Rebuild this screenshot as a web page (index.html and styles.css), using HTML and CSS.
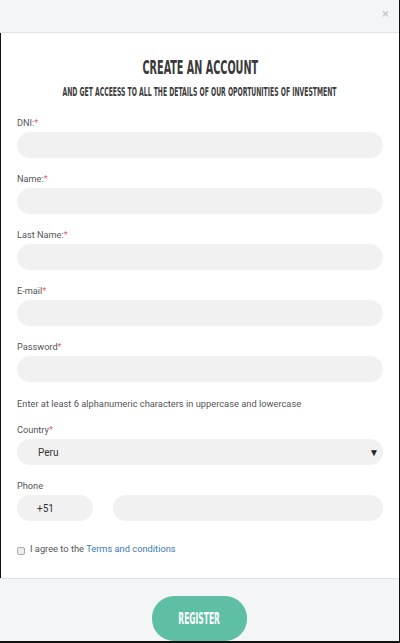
FILE: index.html
```html
<!DOCTYPE html>
<html>
<head>
<meta charset="utf-8">
<link rel="stylesheet" href="styles.css">
</head>
<body>
<div class="modal">
  <div class="modal-header"><span class="close">&times;</span></div>
  <div class="modal-body">
    <h1 class="title"><span>CREATE AN ACCOUNT</span></h1>
    <p class="subtitle"><span>AND GET ACCEESS TO ALL THE DETAILS OF OUR OPORTUNITIES OF INVESTMENT</span></p>
    <form class="form">
      <div class="field">
        <label class="label">DNI:<span class="req">*</span></label>
        <div class="input"></div>
      </div>
      <div class="field">
        <label class="label">Name:<span class="req">*</span></label>
        <div class="input"></div>
      </div>
      <div class="field">
        <label class="label">Last Name:<span class="req">*</span></label>
        <div class="input"></div>
      </div>
      <div class="field">
        <label class="label">E-mail<span class="req">*</span></label>
        <div class="input"></div>
      </div>
      <div class="field">
        <label class="label">Password<span class="req">*</span></label>
        <div class="input"></div>
      </div>
      <p class="hint">Enter at least 6 alphanumeric characters in uppercase and lowercase</p>
      <div class="field">
        <label class="label">Country<span class="req">*</span></label>
        <div class="input select"><span>Peru</span><span class="arrow">&#9660;</span></div>
      </div>
      <div class="field">
        <label class="label">Phone</label>
        <div class="phone-row">
          <div class="input code">+51</div>
          <div class="input number"></div>
        </div>
      </div>
      <div class="agree">
        <span class="checkbox"></span>
        <span>I agree to the <a class="link">Terms and conditions</a></span>
      </div>
    </form>
  </div>
  <div class="modal-footer">
    <button class="btn" type="button"><span>REGISTER</span></button>
  </div>
</div>
</body>
</html>
```
FILE: styles.css
```css
* { box-sizing: border-box; }
html, body { margin: 0; padding: 0; }
body {
  background: #111;
  width: 400px;
  height: 643px;
  overflow: hidden;
  font-family: Roboto, "Liberation Sans", sans-serif;
}
.modal {
  width: 399px;
  height: 641px;
  display: flex;
  flex-direction: column;
}
.modal-header {
  height: 33px;
  background: #f4f5f7;
  border-bottom: 1px solid #e1e2e4;
  position: relative;
}
.close {
  position: absolute;
  right: 10px;
  top: 6px;
  font-size: 13px;
  line-height: 16px;
  color: #c4c4c4;
}
.modal-body {
  flex: 1;
  background: #fff;
  border-left: 1px solid #111;
  padding: 0 16px 0 16px;
}
.title, .subtitle {
  margin: 0;
  display: flex;
  justify-content: center;
  font-family: "DejaVu Sans Condensed", "DejaVu Sans", sans-serif;
  font-weight: bold;
  color: #333;
}
.title span, .subtitle span {
  display: block;
  flex: none;
  white-space: nowrap;
  transform: scaleX(0.565);
  transform-origin: center;
}
.title {
  margin-top: 22px;
  font-size: 19px;
  line-height: 24px;
  color: #3a3a3a;
}
.subtitle {
  margin-top: 5px;
  font-size: 12px;
  line-height: 16px;
  color: #3d3d3d;
}
.form {
  margin-top: 16px;
}
.field { margin-bottom: 14px; }
.label {
  display: block;
  font-size: 9.2px;
  line-height: 14px;
  color: #555;
  margin-bottom: 2px;
}
.req { color: #f06262; }
.input {
  height: 26px;
  border-radius: 13px;
  background: #f1f1f1;
}
.select {
  display: flex;
  align-items: center;
  justify-content: space-between;
  padding: 0 4px 0 21px;
  font-size: 10px;
  color: #333;
}
.arrow {
  font-size: 10px;
  color: #222;
}
.hint {
  margin: 0 0 12px 0;
  padding-top: 1px;
  font-size: 9.3px;
  line-height: 14px;
  color: #555;
}
.phone-row {
  display: flex;
  gap: 20px;
}
.code {
  width: 76px;
  display: flex;
  align-items: center;
  padding-left: 20px;
  font-size: 10px;
  color: #333;
}
.number { flex: 1; }
.agree {
  margin-top: 21px;
  display: flex;
  align-items: center;
  gap: 5px;
  font-size: 9.3px;
  line-height: 14px;
  color: #555;
}
.checkbox {
  width: 8px;
  height: 8px;
  border: 1px solid #aaa;
  border-radius: 2px;
  background: #eee;
  margin-top: 3px;
}
.link { color: #3a7ab3; text-decoration: none; }
.modal-footer {
  height: 63px;
  background: #f4f5f7;
  border-top: 1px solid #e1e2e4;
  display: flex;
  justify-content: center;
  padding-top: 17px;
}
.btn {
  width: 95px;
  height: 45px;
  border: 0;
  border-radius: 22px;
  background: #5fbfa5;
  color: #fff;
  font-family: "DejaVu Sans Condensed", "DejaVu Sans", sans-serif;
  font-weight: bold;
  font-size: 15px;
  padding: 0;
}
.btn span {
  display: inline-block;
  transform: scaleX(0.56);
}
```
